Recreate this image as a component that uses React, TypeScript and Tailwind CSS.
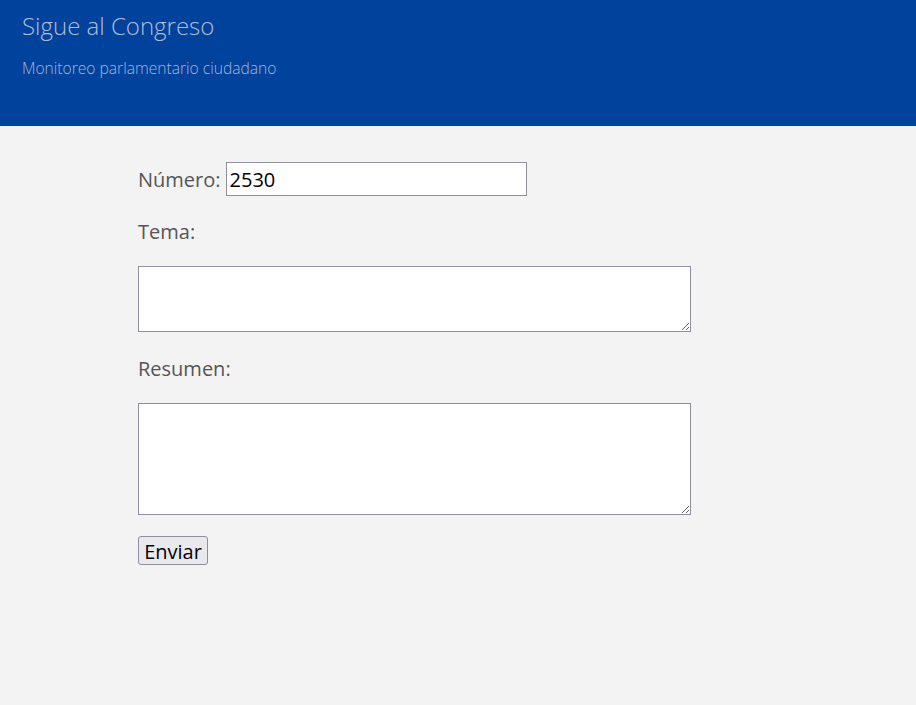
export default function App() {
  return (
    <div className="min-h-[705px] bg-[#f3f3f3] font-['Open_Sans',sans-serif]">
      {/* Header */}
      <header className="h-[126px] bg-[#00429c] px-[22px] pt-[9px]">
        <h1 className="text-[24px] font-light leading-[34px] text-[#b3bdd3]">Sigue al Congreso</h1>
        <p className="mt-[15px] text-[15.6px] font-light leading-[20px] text-[#a9b6d6]">Monitoreo parlamentario ciudadano</p>
      </header>

      {/* Form */}
      <form className="flex flex-col items-start pl-[138px] pt-[36px]" onSubmit={(e) => e.preventDefault()}>
        <div className="flex h-[34px] items-center">
          <label className="text-[20px] leading-[27px] text-[#555]">Número:</label>
          <input
            type="text"
            defaultValue="2530"
            className="ml-[5px] h-[34px] w-[301px] border border-[#8f8f9d] bg-white px-[3px] text-[20px] text-black outline-none"
          />
        </div>

        <label className="mt-[22px] text-[20px] leading-[27px] text-[#555]">Tema:</label>
        <textarea className="mt-[21px] h-[66px] w-[553px] border border-[#8f8f9d] bg-white outline-none" />

        <label className="mt-[23px] text-[20px] leading-[27px] text-[#555]">Resumen:</label>
        <textarea className="mt-[21px] h-[112px] w-[553px] border border-[#8f8f9d] bg-white outline-none" />

        <button
          type="submit"
          className="mt-[21px] h-[29px] w-[70px] rounded-[3px] border border-[#8f8f9d] bg-[#e9e9ed] pt-[2px] text-[20px] leading-[25px] text-black"
        >
          Enviar
        </button>
      </form>
    </div>
  )
}
